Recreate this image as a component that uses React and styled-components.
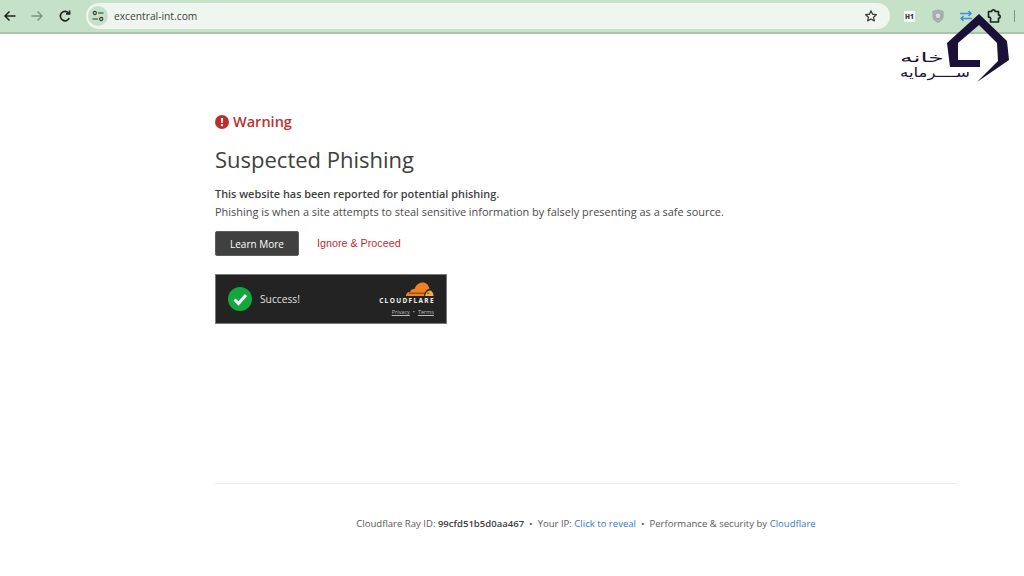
import React from "react";
import styled, { createGlobalStyle } from "styled-components";

const GlobalStyle = createGlobalStyle`
  html, body {
    margin: 0;
    padding: 0;
    background: #fff;
    overflow: hidden;
  }
  body {
    font-family: "Open Sans", "Noto Sans", "Liberation Sans", sans-serif;
    color: #404040;
  }
`;

const Page = styled.div`
  width: 1024px;
  height: 576px;
  position: relative;
  display: flex;
  flex-direction: column;
`;

const Toolbar = styled.header`
  height: 32px;
  flex: none;
  background: #c5e1c7;
  border-bottom: 2px solid #a9c6ab;
  display: flex;
  align-items: center;
  padding-left: 2px;
`;

const NavButton = styled.div`
  width: 16px;
  height: 16px;
  margin-right: ${(p) => p.$gap}px;
  color: ${(p) => p.$color};
  display: flex;
`;

const Omnibox = styled.div`
  width: 804px;
  height: 26px;
  margin-left: 1px;
  border-radius: 13px;
  background: #eff6ef;
  display: flex;
  align-items: center;
  padding: 0 12px 0 2px;
  box-sizing: border-box;
`;

const SiteChip = styled.div`
  width: 20px;
  height: 20px;
  border-radius: 50%;
  background: #c5e1c7;
  display: flex;
  align-items: center;
  justify-content: center;
  margin-right: 6px;
`;

const Url = styled.span`
  font-size: 10.25px;
  color: #3c4043;
  flex: 1;
`;

const Extensions = styled.div`
  display: flex;
  align-items: center;
  margin-left: 14px;
`;

const H1Badge = styled.span`
  width: 11px;
  height: 11px;
  background: #f6f8f6;
  color: #3c4043;
  font-size: 6.5px;
  font-weight: 800;
  display: flex;
  align-items: center;
  justify-content: center;
  margin-right: 16px;
`;

const ExtIcon = styled.div`
  display: flex;
  margin-right: ${(p) => p.$gap}px;
`;

const Divider = styled.span`
  width: 1px;
  height: 12px;
  background: #7f8f80;
`;

const Logo = styled.svg`
  position: absolute;
  left: 898px;
  top: 14px;
  width: 112px;
  height: 70px;
`;

const LogoText = styled.text`
  font-family: "DejaVu Sans", sans-serif;
  font-size: 13px;
  fill: #1a1038;
`;

const Main = styled.main`
  flex: 1;
  padding: 77px 67px 45px 215px;
  display: flex;
  flex-direction: column;
`;

const Warning = styled.div`
  display: flex;
  align-items: center;
  gap: 4px;
  color: #bc2f2f;
  font-size: 14.5px;
  font-weight: 600;
  line-height: 22px;
  margin-bottom: 9px;
`;

const Title = styled.h1`
  margin: 0 0 9px;
  font-size: 22px;
  font-weight: 400;
  line-height: 34px;
  color: #404040;
`;

const Lead = styled.p`
  margin: 0;
  font-size: 10.9px;
  font-weight: 600;
  line-height: 18px;
  color: #404040;
`;

const Body = styled.p`
  margin: 0;
  font-size: 10.95px;
  line-height: 18px;
  color: #4a4a4a;
`;

const Actions = styled.div`
  display: flex;
  align-items: center;
  margin-top: 10px;
`;

const LearnMore = styled.button`
  width: 84px;
  height: 25px;
  padding: 0;
  border: 1px solid #5d5d5d;
  border-radius: 2px;
  background: #404040;
  color: #fff;
  font: 400 10px "Open Sans", sans-serif;
`;

const Ignore = styled.a`
  margin-left: 18px;
  margin-bottom: 2px;
  font: 400 10.75px "Liberation Sans", sans-serif;
  color: #bc2f2f;
`;

const Turnstile = styled.div`
  width: 232px;
  height: 50px;
  margin-top: 18px;
  box-sizing: border-box;
  border: 1px solid #797979;
  background: #232323;
  display: flex;
  align-items: center;
  padding: 0 12px;
`;

const Check = styled.svg`
  width: 24px;
  height: 24px;
  margin-right: 8px;
`;

const Success = styled.span`
  flex: 1;
  color: #e0e0e0;
  font-size: 10.25px;
`;

const Brand = styled.div`
  display: flex;
  flex-direction: column;
  align-items: flex-end;
`;

const BrandName = styled.span`
  font: 700 6.5px/8px "Open Sans", sans-serif;
  letter-spacing: 1.35px;
  margin-right: -1px;
  color: #f2f2f2;
`;

const BrandLinks = styled.span`
  margin-top: 4px;
  font-size: 5.5px;
  line-height: 7px;
  color: #bdbdbd;
  display: flex;
  gap: 3px;
  u {
    text-decoration: underline;
  }
`;

const Footer = styled.footer`
  margin-top: auto;
  border-top: 1px solid #ededed;
  padding-top: 33px;
  display: flex;
  justify-content: center;
  font-size: 9.55px;
  line-height: 14px;
  color: #595959;
  white-space: pre;
  b {
    font-weight: 600;
    color: #404040;
  }
`;

const FooterLink = styled.a`
  color: #2f7bbf;
`;

const BackArrow = () => (
  <svg width="16" height="16" viewBox="0 0 16 16" fill="none" stroke="currentColor" strokeWidth="1.5">
    <path d="M13.5 8H3M7.5 3.5 3 8l4.5 4.5" />
  </svg>
);

const ForwardArrow = () => (
  <svg width="16" height="16" viewBox="0 0 16 16" fill="none" stroke="currentColor" strokeWidth="1.3">
    <path d="M2.5 8H13M8.5 3.5 13 8l-4.5 4.5" />
  </svg>
);

const Reload = () => (
  <svg width="16" height="16" viewBox="0 0 16 16" fill="none" stroke="currentColor" strokeWidth="1.6">
    <path d="M12.3 10.2A4.7 4.7 0 1 1 11.6 5" />
    <path d="M12.6 2.4v3.5H9.1" />
  </svg>
);

const Tune = () => (
  <svg width="12" height="12" viewBox="0 0 12 12" fill="none" stroke="#2f3a31" strokeWidth="1.1">
    <circle cx="2.8" cy="3" r="1.6" />
    <path d="M6 3h5.5M.5 9H6" />
    <circle cx="9.2" cy="9" r="1.6" />
  </svg>
);

const Star = () => (
  <svg width="14" height="14" viewBox="0 0 24 24" fill="none" stroke="#3c4043" strokeWidth="2.2" strokeLinejoin="round">
    <path d="m12 3 2.7 6 6.5.7-4.9 4.3 1.4 6.4L12 17.1l-5.7 3.3 1.4-6.4L2.8 9.7 9.3 9z" />
  </svg>
);

const Shield = () => (
  <svg width="14" height="14" viewBox="0 0 14 14">
    <path d="M7 .8 12.2 2.4v4.8C12.2 10.3 9.8 12.4 7 13.4 4.2 12.4 1.8 10.3 1.8 7.2V2.4z" fill="#a9b4b4" stroke="#8f9d9f" strokeWidth=".6" />
    <circle cx="7" cy="6.8" r="3" fill="#d5dcdc" stroke="#8d9a9c" strokeWidth=".9" />
  </svg>
);

const Swap = () => (
  <svg width="14" height="14" viewBox="0 0 14 14" fill="none" stroke="#3d8fe0" strokeWidth="1.5">
    <path d="M1 4.5h11M9.5 2 12 4.5 9.5 7" />
    <path d="M13 9.5H2M4.5 7 2 9.5 4.5 12" />
  </svg>
);

const Puzzle = () => (
  <svg width="16" height="16" viewBox="0 0 16 16" fill="none" stroke="#1a1f1c" strokeWidth="1.6" strokeLinejoin="round">
    <path d="M2.5 3.5h3.2a1.7 1.7 0 0 1 3.4 0h3.4v3.4a1.7 1.7 0 0 1 0 3.4v3.7H4.5v-2.3a1.7 1.7 0 0 0-2-2.5z" />
  </svg>
);

const AlertIcon = () => (
  <svg width="14" height="14" viewBox="0 0 14 14">
    <circle cx="7" cy="7" r="7" fill="#bc2f2f" />
    <path d="M5.9 3h2.2l-.4 5H6.3z" fill="#fff" />
    <circle cx="7" cy="10.2" r="1.15" fill="#fff" />
  </svg>
);

const Cloud = () => (
  <svg width="29" height="15" viewBox="0 0 29 15">
    <path d="M1 14c0-2.4 1.7-4 4-3.900C5.800 7.600 7.600 6.500 9.500 7 11 2.700 14.200.5 17.500.5c3.800 0 6.300 2.500 7 6.500-2.400 0-5 2.700-5.500 7z" fill="#f38020" />
    <path d="M20 14c.6-3.300 2.500-5.600 4.700-5.600 2 0 3.800 2 3.800 5.600z" fill="#faad3f" />
    <path d="M4 11.200h16.600M22 11.200h2.500" stroke="#232323" strokeWidth=".7" />
  </svg>
);

const App = () => {
  return (
    <Page>
      <GlobalStyle />
      <Toolbar>
        <NavButton $gap={11} $color="#1f2421"><BackArrow /></NavButton>
        <NavButton $gap={12} $color="#7c9380"><ForwardArrow /></NavButton>
        <NavButton $gap={12} $color="#1f2421"><Reload /></NavButton>
        <Omnibox>
          <SiteChip><Tune /></SiteChip>
          <Url>excentral-int.com</Url>
          <Star />
        </Omnibox>
        <Extensions>
          <H1Badge>H1</H1Badge>
          <ExtIcon $gap={14}><Shield /></ExtIcon>
          <ExtIcon $gap={13}><Swap /></ExtIcon>
          <ExtIcon $gap={12}><Puzzle /></ExtIcon>
          <Divider />
        </Extensions>
      </Toolbar>

      <Logo viewBox="0 0 112 70" aria-hidden="true">
        <path d="M81 0 109 27 111 46 79 68 100 47 99 29 81 11 60 29 60 46 82 46 82 53 52 53 49 29z" fill="#1a1038" />
        <LogoText x="2" y="48" textAnchor="end" textLength="44" lengthAdjust="spacingAndGlyphs" direction="rtl">خانه</LogoText>
        <LogoText x="2" y="63" textAnchor="end" textLength="70" lengthAdjust="spacingAndGlyphs" direction="rtl">ســــرمایه</LogoText>
      </Logo>

      <Main>
        <Warning><AlertIcon />Warning</Warning>
        <Title>Suspected Phishing</Title>
        <Lead>This website has been reported for potential phishing.</Lead>
        <Body>Phishing is when a site attempts to steal sensitive information by falsely presenting as a safe source.</Body>
        <Actions>
          <LearnMore>Learn More</LearnMore>
          <Ignore>Ignore &amp; Proceed</Ignore>
        </Actions>
        <Turnstile>
          <Check viewBox="0 0 24 24">
            <circle cx="12" cy="12" r="12" fill="#14a73e" />
            <path d="m6.500 12.500 4 4 7.500-8.500" fill="none" stroke="#fff" strokeWidth="3" />
          </Check>
          <Success>Success!</Success>
          <Brand>
            <Cloud />
            <BrandName>CLOUDFLARE</BrandName>
            <BrandLinks><u>Privacy</u><span>•</span><u>Terms</u></BrandLinks>
          </Brand>
        </Turnstile>
        <Footer>
          Cloudflare Ray ID: <b>99cfd51b5d0aa467</b>{"  •  "}Your IP: <FooterLink>Click to reveal</FooterLink>{"  •  "}Performance &amp; security by <FooterLink>Cloudflare</FooterLink>
        </Footer>
      </Main>
    </Page>
  );
};

export default App;
